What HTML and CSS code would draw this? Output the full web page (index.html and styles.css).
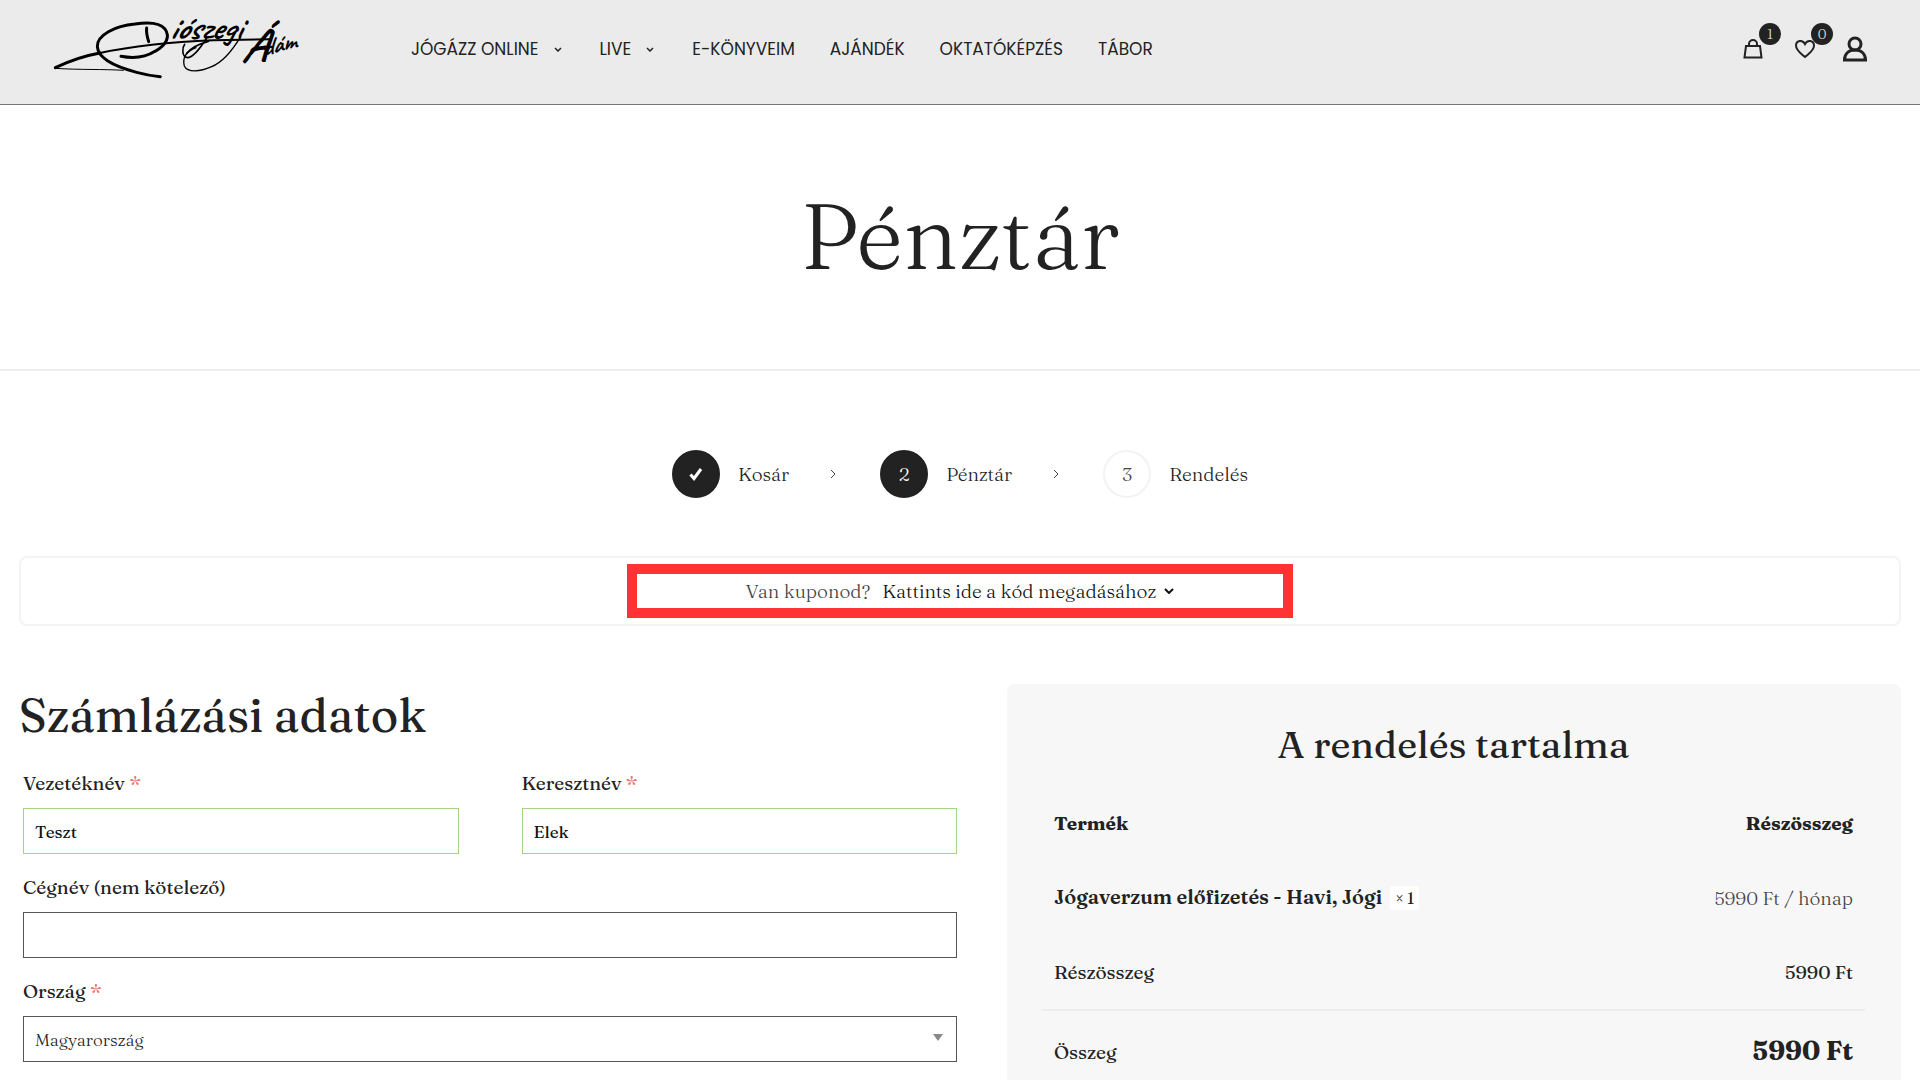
FILE: index.html
```html
<!DOCTYPE html>
<html lang="hu">
<head>
  <meta charset="UTF-8">
  <meta name="viewport" content="width=device-width, initial-scale=1">
  <title>Pénztár</title>
  <link rel="stylesheet" href="styles.css">
</head>
<body>

  <!-- Header -->
  <header class="header">
    <a class="logo" href="#" aria-label="Diószegi Ádám">
      <svg width="250" height="75" viewBox="0 0 750 225" fill="none" stroke="#000" stroke-linecap="round" stroke-linejoin="round">
        <path stroke-width="3" d="M250 181 C190 177 120 180 45 175"/>
        <path stroke-width="9" d="M46 173 C90 152 135 137 180 129"/>
        <path stroke-width="6" d="M180 129 C280 108 400 96 520 91 L690 88"/>
        <path stroke-width="9" d="M243 139 C280 146 315 143 345 124 C380 104 391 80 375 57 C358 36 318 37 285 42 C225 47 170 76 172 110 C175 152 240 174 290 187 C315 194 340 198 361 200"/>
        <path stroke-width="9" d="M320 54 C318 68 322 82 326 95"/>
        <path stroke-width="5" d="M500 84 C485 108 462 142 442 143 C424 140 427 112 434 103 M440 130 C455 112 480 101 505 94"/>
        <path stroke-width="4" d="M602 80 C575 125 545 158 515 170 C480 186 442 188 433 168 C426 142 438 125 468 113"/>
        <g class="logo-text">
          <text x="388" y="88" font-size="102">iószegi</text>
          <text x="604" y="152" font-size="140">Á</text>
          <text x="672" y="138" font-size="72" transform="rotate(-14 672 138)">dám</text>
        </g>
      </svg>
    </a>

    <nav class="nav">
      <a href="#">JÓGÁZZ ONLINE
        <svg width="8" height="5" viewBox="0 0 8 5"><path d="M1 1l3 3 3-3"/></svg>
      </a>
      <a href="#">LIVE
        <svg width="8" height="5" viewBox="0 0 8 5"><path d="M1 1l3 3 3-3"/></svg>
      </a>
      <a href="#">E-KÖNYVEIM</a>
      <a href="#">AJÁNDÉK</a>
      <a href="#">OKTATÓKÉPZÉS</a>
      <a href="#">TÁBOR</a>
    </nav>

    <div class="header-icons">
      <a href="#" aria-label="Kosár">
        <svg width="20" height="20" viewBox="0 0 20 20"><path d="M3 7h14l1.500 11.500h-17zM6 7V5a4 4 0 0 1 8 0v2"/></svg>
        <span class="badge">1</span>
      </a>
      <a href="#" aria-label="Kívánságlista">
        <svg width="20" height="20" viewBox="0 0 20 20"><path d="M10 18C6 14.500 1 11.500 1 6.500C1 1.500 7.500 0 10 5C12.500 0 19 1.500 19 6.500C19 11.500 14 14.500 10 18z"/></svg>
        <span class="badge">0</span>
      </a>
      <a href="#" aria-label="Fiókom">
        <svg class="user" width="24" height="26" viewBox="0 0 24 26"><circle cx="12" cy="8" r="6"/><path d="M1.500 24c0-6 4-10 10.500-10s10.500 4 10.500 10z"/></svg>
      </a>
    </div>
  </header>

  <div class="page-title">
    <h1>Pénztár</h1>
  </div>

  <main class="content">

    <!-- Checkout steps -->
    <ol class="steps">
      <li>
        <span class="step-number active"><svg width="16" height="16" viewBox="0 0 16 16"><path d="M2.500 8.500l3.500 4L13 3"/></svg></span>
        Kosár
      </li>
      <li class="step-arrow" aria-hidden="true"><svg width="6" height="10" viewBox="0 0 6 10"><path d="M1 1l4 4-4 4"/></svg></li>
      <li><span class="step-number active">2</span> Pénztár</li>
      <li class="step-arrow" aria-hidden="true"><svg width="6" height="10" viewBox="0 0 6 10"><path d="M1 1l4 4-4 4"/></svg></li>
      <li><span class="step-number">3</span> Rendelés</li>
    </ol>

    <!-- Coupon -->
    <div class="coupon">
      <div class="coupon-highlight">
        <span>Van kuponod?</span>
        <button type="button">Kattints ide a kód megadásához
          <svg width="10" height="6" viewBox="0 0 10 6"><path d="M1 1l4 4 4-4"/></svg>
        </button>
      </div>
    </div>

    <div class="checkout">
      <form class="billing">
        <h2>Számlázási adatok</h2>
        <div class="fields">
          <div class="field">
            <label for="lastName">Vezetéknév <span class="required">*</span></label>
            <input class="valid" type="text" id="lastName" value="Teszt">
          </div>
          <div class="field">
            <label for="firstName">Keresztnév <span class="required">*</span></label>
            <input class="valid" type="text" id="firstName" value="Elek">
          </div>
          <div class="field wide">
            <label for="company">Cégnév (nem kötelező)</label>
            <input type="text" id="company">
          </div>
          <div class="field wide">
            <label for="country">Ország <span class="required">*</span></label>
            <div class="select-wrap">
              <select id="country">
                <option>Magyarország</option>
              </select>
            </div>
          </div>
        </div>
      </form>

      <!-- Order summary -->
      <section class="order">
        <h3>A rendelés tartalma</h3>
        <table>
          <thead>
            <tr><th>Termék</th><th>Részösszeg</th></tr>
          </thead>
          <tbody>
            <tr>
              <td class="product">Jógaverzum előfizetés - Havi, Jógi <span class="quantity">× 1</span></td>
              <td class="price">5990 Ft / hónap</td>
            </tr>
          </tbody>
          <tfoot>
            <tr><td>Részösszeg</td><td>5990 Ft</td></tr>
            <tr class="total"><td>Összeg</td><td><strong>5990 Ft</strong></td></tr>
          </tfoot>
        </table>
      </section>
    </div>
  </main>

</body>
</html>
```

FILE: styles.css
```css
:root {
  --text-color: #222;
  --muted: #444;
  --line: #f3f3f3;
  --highlight: #ff3333;
}

* {
  box-sizing: border-box;
}

body {
  margin: 0;
  background-color: #fff;
  color: var(--text-color);
  font-family: Fraunces, "Liberation Serif", serif;
  font-size: 19px;
  line-height: 24px;
}

a {
  color: inherit;
  text-decoration: none;
}

h1, h2, h3 {
  margin: 0;
  font-weight: 400;
}

svg {
  flex: none;
  fill: none;
  stroke: currentColor;
}

/* Header */
.header {
  display: flex;
  align-items: flex-start;
  height: 105px;
  padding: 10px 53px 0 40px;
  background-color: #ebebeb;
  border-bottom: 1px solid #777;
}

.logo svg {
  display: block;
  overflow: visible;
  stroke: #000;
}

.logo-text {
  fill: #000;
  stroke: none;
  font-family: Caveat, "Dancing Script", "Liberation Serif", serif;
  font-style: italic;
  font-weight: bold;
}

.nav {
  display: flex;
  gap: 35px;
  margin: 27px auto 0 121px;
  font-family: Poppins, Inter, sans-serif;
  font-size: 17px;
  font-weight: 400;
}

.nav a {
  display: flex;
  align-items: center;
  gap: 15px;
}

.nav svg {
  margin-right: 3px;
  stroke-width: 1.5;
}

.header-icons {
  display: flex;
  align-items: center;
  gap: 32px;
  margin-top: 26px;
}

.header-icons a {
  position: relative;
  display: flex;
}

.header-icons svg {
  stroke-width: 2;
}

.header-icons .user {
  margin-left: -4px;
  stroke-width: 3;
}

.badge {
  position: absolute;
  top: -16px;
  left: 16px;
  width: 22px;
  height: 22px;
  border-radius: 50%;
  background-color: var(--text-color);
  color: #ddd;
  font-size: 14px;
  font-weight: 300;
  line-height: 22px;
  text-align: center;
}

/* Page title */
.page-title {
  padding: 71px 0 73px;
  border-bottom: 2px solid #eee;
  text-align: center;
}

.page-title h1 {
  font-size: 92px;
  font-weight: 300;
  line-height: 120px;
}

.content {
  padding: 79px 19px 0;
}

/* Steps */
.steps {
  display: flex;
  justify-content: center;
  margin: 0;
  padding: 0;
  list-style: none;
  font-weight: 300;
}

.steps li {
  display: flex;
  align-items: center;
  gap: 18px;
}

.steps .step-arrow {
  margin: 0 44px 0 41px;
  color: var(--muted);
}

.step-number {
  display: flex;
  align-items: center;
  justify-content: center;
  width: 48px;
  height: 48px;
  border: 2px solid var(--line);
  border-radius: 50%;
  color: var(--muted);
}

.step-number.active {
  border-color: var(--text-color);
  background-color: var(--text-color);
  color: #fff;
}

.step-number svg {
  stroke-width: 3;
}

/* Coupon */
.coupon {
  margin-top: 58px;
  padding: 6px;
  border: 2px solid var(--line);
  border-radius: 8px;
  font-weight: 300;
}

.coupon-highlight {
  display: flex;
  align-items: center;
  justify-content: center;
  gap: 12px;
  width: 666px;
  max-width: 100%;
  margin: 0 auto;
  padding: 5px 0;
  border: 10px solid var(--highlight);
  color: var(--muted);
}

.coupon button {
  display: flex;
  align-items: center;
  gap: 8px;
  padding: 0;
  border: none;
  background: none;
  color: #111;
  font: inherit;
  cursor: pointer;
}

.coupon svg {
  stroke-width: 2;
}

/* Billing form */
.checkout {
  display: grid;
  grid-template-columns: minmax(0, 942fr) minmax(0, 894fr);
  gap: 46px;
  margin-top: 58px;
}

.billing h2 {
  font-size: 47px;
  line-height: 62px;
}

.fields {
  display: grid;
  grid-template-columns: 1fr 1fr;
  gap: 22px 63px;
  padding: 25px 4px 16px;
}

.wide {
  grid-column: 1 / -1;
}

.field label {
  display: block;
  margin-bottom: 13px;
  font-weight: 500;
}

.required {
  color: #f0706a;
}

.field input,
.field select {
  display: block;
  width: 100%;
  height: 46px;
  padding: 0 11px;
  border: 1px solid #555;
  border-radius: 0;
  background-color: #fff;
  color: #222;
  font-family: inherit;
  font-size: 17px;
  font-weight: 300;
  appearance: none;
}

.field + .wide {
  margin-top: -1px;
}

.field input.valid {
  border-color: #a3d489;
  color: #111;
  font-weight: 500;
}

.select-wrap {
  position: relative;
}

.select-wrap::after {
  content: "";
  position: absolute;
  top: 18px;
  right: 14px;
  border: 5px solid transparent;
  border-top: 7px solid #888;
  border-bottom: 0;
  pointer-events: none;
}

/* Order summary */
.order {
  padding: 35px 36px 48px 35px;
  border-radius: 8px;
  background-color: #f7f7f7;
}

.order h3 {
  font-size: 38px;
  line-height: 52px;
  text-align: center;
}

.order table {
  width: 100%;
  margin-top: 14px;
  border-collapse: collapse;
}

.order th,
.order td {
  height: 75px;
  padding: 0 12px;
  text-align: left;
}

.order th:last-child,
.order td:last-child {
  text-align: right;
}

.order .product {
  font-size: 20px;
  font-weight: 600;
}

.order .price {
  color: var(--muted);
  font-weight: 300;
}

.quantity {
  display: inline-block;
  margin-left: 4px;
  padding: 0 5px;
  border-radius: 3px;
  background-color: #fff;
  font-size: 16px;
  font-weight: 400;
}

.total {
  border-top: 2px solid #ececec;
}

.order .total td {
  height: 82px;
}

.total strong {
  font-size: 26px;
}
```
